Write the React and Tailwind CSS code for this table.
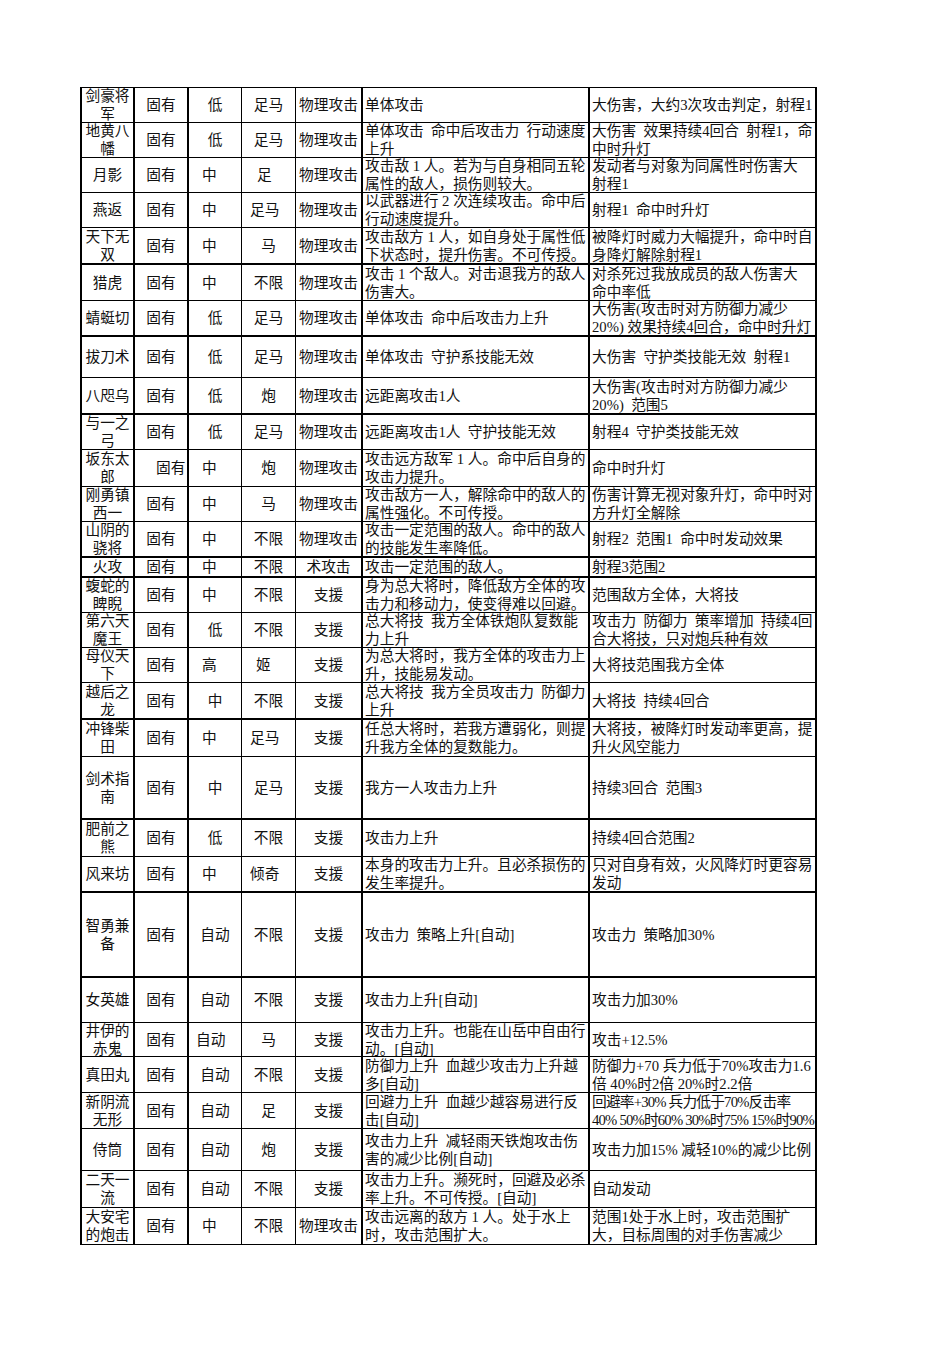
const L = 'justify-start pl-[13px]'
const L4 = 'justify-start pl-[8px]'

const rows = [
  { n: '剑豪将\n军', a: '低', b: '足马', c: '物理攻击', d: '单体攻击', e: '大伤害，大约3次攻击判定，射程1', h: 'h-[35px]' },
  { n: '地黄八\n幡', a: '低', b: '足马', c: '物理攻击', d: '单体攻击  命中后攻击力  行动速度\n上升', e: '大伤害  效果持续4回合  射程1，命\n中时升灯', h: 'h-[35px]' },
  { n: '月影', a: '中', al: L, b: '足', bl: 'justify-start pl-[15px]', c: '物理攻击', d: '攻击敌 1 人。若为与自身相同五轮\n属性的敌人，损伤则较大。', e: '发动者与对象为同属性时伤害大\n射程1', h: 'h-[35px]' },
  { n: '燕返', a: '中', al: L, b: '足马', bl: L4, c: '物理攻击', d: '以武器进行 2 次连续攻击。命中后\n行动速度提升。', e: '射程1  命中时升灯', h: 'h-[35px]' },
  { n: '天下无\n双', a: '中', al: L, b: '马', c: '物理攻击', d: '攻击敌方 1 人，如自身处于属性低\n下状态时，提升伤害。不可传授。', e: '被降灯时威力大幅提升，命中时自\n身降灯解除射程1', h: 'h-[37px]', thick: true },
  { n: '猎虎', a: '中', al: L, b: '不限', c: '物理攻击', d: '攻击 1 个敌人。对击退我方的敌人\n伤害大。', e: '对杀死过我放成员的敌人伤害大\n命中率低', h: 'h-[36px]' },
  { n: '蜻蜓切', a: '低', b: '足马', c: '物理攻击', d: '单体攻击  命中后攻击力上升', e: '大伤害(攻击时对方防御力减少\n20%) 效果持续4回合，命中时升灯', h: 'h-[36px]', thick: true },
  { n: '拔刀术', a: '低', b: '足马', c: '物理攻击', d: '单体攻击  守护系技能无效', e: '大伤害  守护类技能无效  射程1', h: 'h-[41px]' },
  { n: '八咫乌', a: '低', b: '炮', c: '物理攻击', d: '远距离攻击1人', e: '大伤害(攻击时对方防御力减少\n20%)  范围5', h: 'h-[37px]', thick: true },
  { n: '与一之\n弓', a: '低', b: '足马', c: '物理攻击', d: '远距离攻击1人  守护技能无效', e: '射程4  守护类技能无效', h: 'h-[35px]' },
  { n: '坂东太\n郎', g: 'justify-start pl-[21px]', a: '中', al: L, b: '炮', c: '物理攻击', d: '攻击远方敌军 1 人。命中后自身的\n攻击力提升。', e: '命中时升灯', h: 'h-[37px]' },
  { n: '刚勇镇\n西一', a: '中', al: L, b: '马', c: '物理攻击', d: '攻击敌方一人，解除命中的敌人的\n属性强化。不可传授。', e: '伤害计算无视对象升灯，命中时对\n方升灯全解除', h: 'h-[35px]' },
  { n: '山阴的\n骁将', a: '中', al: L, b: '不限', c: '物理攻击', d: '攻击一定范围的敌人。命中的敌人\n的技能发生率降低。', e: '射程2  范围1  命中时发动效果', h: 'h-[36px]', thick: true },
  { n: '火攻', a: '中', al: L, b: '不限', c: '术攻击', d: '攻击一定范围的敌人。', e: '射程3范围2', h: 'h-[20px]', thick: true },
  { n: '蝮蛇的\n睥睨', a: '中', al: L, b: '不限', c: '支援', d: '身为总大将时，降低敌方全体的攻\n击力和移动力，使变得难以回避。', e: '范围敌方全体，大将技', h: 'h-[35px]' },
  { n: '第六天\n魔王', a: '低', b: '不限', c: '支援', d: '总大将技  我方全体铁炮队复数能\n力上升', e: '攻击力  防御力  策率增加  持续4回\n合大将技，只对炮兵种有效', h: 'h-[35px]' },
  { n: '母仪天\n下', a: '高', al: L, b: '姬', bl: 'justify-start pl-[14px]', c: '支援', d: '为总大将时，我方全体的攻击力上\n升，技能易发动。', e: '大将技范围我方全体', h: 'h-[35px]' },
  { n: '越后之\n龙', a: '中', b: '不限', c: '支援', d: '总大将技  我方全员攻击力  防御力\n上升', e: '大将技  持续4回合', h: 'h-[37px]', thick: true },
  { n: '冲锋柴\n田', a: '中', al: L, b: '足马', bl: L4, c: '支援', d: '任总大将时，若我方遭弱化，则提\n升我方全体的复数能力。', e: '大将技，被降灯时发动率更高，提\n升火风空能力', h: 'h-[37px]' },
  { n: '剑术指\n南', a: '中', b: '足马', c: '支援', d: '我方一人攻击力上升', e: '持续3回合  范围3', h: 'h-[63px]', thick: true },
  { n: '肥前之\n熊', a: '低', b: '不限', c: '支援', d: '攻击力上升', e: '持续4回合范围2', h: 'h-[37px]' },
  { n: '风来坊', a: '中', al: L, b: '倾奇', bl: L4, c: '支援', d: '本身的攻击力上升。且必杀损伤的\n发生率提升。', e: '只对自身有效，火风降灯时更容易\n发动', h: 'h-[36px]', thick: true },
  { n: '智勇兼\n备', a: '自动', b: '不限', c: '支援', d: '攻击力  策略上升[自动]', e: '攻击力  策略加30%', h: 'h-[85px]', thick: true },
  { n: '女英雄', a: '自动', b: '不限', c: '支援', d: '攻击力上升[自动]', e: '攻击力加30%', h: 'h-[45px]' },
  { n: '井伊的\n赤鬼', a: '自动', al: 'justify-start pl-[7px]', b: '马', c: '支援', d: '攻击力上升。也能在山岳中自由行\n动。[自动]', e: '攻击+12.5%', h: 'h-[34px]' },
  { n: '真田丸', a: '自动', b: '不限', c: '支援', d: '防御力上升  血越少攻击力上升越\n多[自动]', e: '防御力+70 兵力低于70%攻击力1.6\n倍 40%时2倍 20%时2.2倍', h: 'h-[36px]' },
  { n: '新阴流\n无形', a: '自动', b: '足', c: '支援', d: '回避力上升  血越少越容易进行反\n击[自动]', e: '回避率+30% 兵力低于70%反击率\n40% 50%时60% 30%时75% 15%时90%', ec: 'tracking-[-0.8px]', h: 'h-[36px]' },
  { n: '侍筒', a: '自动', b: '炮', c: '支援', d: '攻击力上升  减轻雨天铁炮攻击伤\n害的减少比例[自动]', e: '攻击力加15% 减轻10%的减少比例', h: 'h-[42px]' },
  { n: '二天一\n流', a: '自动', b: '不限', c: '支援', d: '攻击力上升。濒死时，回避及必杀\n率上升。不可传授。[自动]', e: '自动发动', h: 'h-[37px]' },
  { n: '大安宅\n的炮击', a: '中', al: L, b: '不限', c: '物理攻击', d: '攻击远离的敌方 1 人。处于水上\n时，攻击范围扩大。', e: '范围1处于水上时，攻击范围扩\n大，目标周围的对手伤害减少', h: 'h-[37px]' },
]

function Cell({ w, cls = 'justify-center', text, center }) {
  return (
    <div className={`flex h-full items-center overflow-hidden border-black ${w} ${cls}`}>
      <div className={`whitespace-pre ${center ? 'w-full text-center' : ''}`}>{text}</div>
    </div>
  )
}

export default function App() {
  return (
    <div className="min-h-screen bg-white pl-[80px] pt-[87px] font-['Liberation_Serif','Noto_Sans_CJK_SC',serif] text-[14.7px] leading-[18px] text-[#111]">
      <div className="w-[737px] border-t border-l-2 border-black">
        {rows.map((r, i) => (
          <div key={i} className={`flex border-black ${r.h} ${r.thick ? 'border-b-2' : 'border-b'}`}>
            <Cell w="w-[53px] border-r-2" text={r.n} center />
            <Cell w="w-[54px] border-r-2" cls={r.g || 'justify-center'} text="固有" />
            <Cell w="w-[53px] border-r" cls={r.al || 'justify-center'} text={r.a} />
            <Cell w="w-[54px] border-r" cls={r.bl || 'justify-center'} text={r.b} />
            <Cell w="w-[67px] border-r-2" text={r.c} />
            <Cell w="w-[227px] border-r-2" cls="justify-start pl-[2px]" text={r.d} />
            <Cell w="w-[227px] border-r-2" cls={`justify-start pl-[2px] ${r.ec || ''}`} text={r.e} />
          </div>
        ))}
      </div>
    </div>
  )
}
